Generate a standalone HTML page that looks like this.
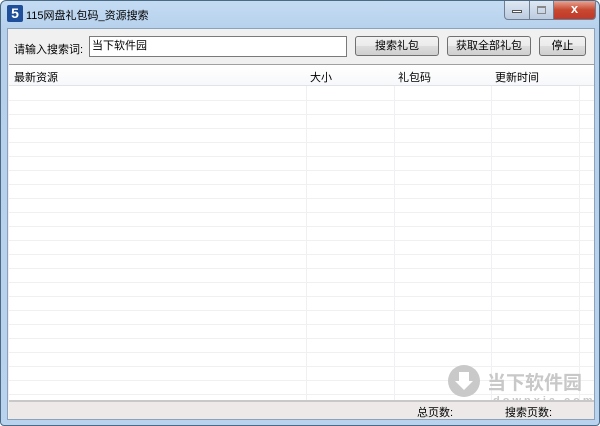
<!DOCTYPE html><html><head><meta charset="utf-8"><style>
*{margin:0;padding:0;box-sizing:border-box}
body{width:600px;height:426px;overflow:hidden;font:11px "Liberation Sans","Noto Sans CJK SC",sans-serif;color:#000;background:#fff}
.win{position:absolute;left:0;top:0;width:600px;height:426px;border:1px solid #4d6a85;border-radius:6px 6px 4px 4px;background:linear-gradient(#c4dcf3,#b6d0ec 30px,#b9d3ee);}
.title{position:absolute;left:25px;top:6px;font-size:11px;color:#000}
.logo{position:absolute;left:6px;top:4px;width:16px;height:17px;background:#1f4e9a;color:#fff;font:bold 14px "Liberation Sans";text-align:center;line-height:17px;border-radius:2px}
.client{position:absolute;left:6px;top:27px;width:588px;height:392px;background:#f0f0f0;border:1px solid #8aa2ba}
.btn{position:absolute;height:20px;border:1px solid #707070;border-radius:3px;background:linear-gradient(#f2f2f2,#ebebeb 50%,#dddddd 51%,#cfcfcf);text-align:center;line-height:18px}
.input{position:absolute;left:81px;top:7px;width:258px;height:21px;border:1px solid #7a7a7a;background:#fff;padding-left:2px;line-height:19px}
.list{position:absolute;left:1px;top:35px;width:585px;height:337px;background:#fff;border-top:1px solid #a0a0a0;
background-image:repeating-linear-gradient(#fff 0 13px,#f0f0f0 13px 14px);background-position:0 22px;background-repeat:repeat-x}
.hdr{position:absolute;left:0;top:0;width:585px;height:21px;background:linear-gradient(#fff,#f7f8fa);border-bottom:1px solid #e0e3e8}
.hdr span{position:absolute;top:4px}
.col{position:absolute;top:0;width:1px;height:337px;background:#eef0f3}
.status{position:absolute;left:1px;top:371px;width:585px;height:19px;background:#ece9e8;border-top:2px solid #c8c8c8}
.status span{position:absolute;top:2px}
.cap{position:absolute;top:0;height:19px;border:1px solid #6f7f93;border-top:none}
</style></head><body>
<div class="win">
<div class="logo">5</div>
<div class="title">115网盘礼包码_资源搜索</div>
<div class="cap" style="left:503px;width:26px;border-radius:0 0 0 4px;background:linear-gradient(#dfe8f3,#bccbe0)"><div style="margin:9px auto 0;width:10px;height:3px;background:#fff;border:1px solid #555"></div></div>
<div class="cap" style="left:528px;width:25px;background:linear-gradient(#dfe8f3,#bccbe0)"><div style="margin:5px auto 0;width:9px;height:8px;border:1px solid #888;border-top-width:2px"></div></div>
<div class="cap" style="left:552px;width:43px;border-radius:0 0 4px 0;background:linear-gradient(#e8a393,#c7482f 50%,#c0392b);color:#fff;text-align:center;font-weight:bold;line-height:16px;font-size:13px">x</div>
<div class="client">
<span style="position:absolute;left:6px;top:12px">请输入搜索词:</span>
<div class="input">当下软件园</div>
<div class="btn" style="left:347px;top:7px;width:84px">搜索礼包</div>
<div class="btn" style="left:439px;top:7px;width:84px">获取全部礼包</div>
<div class="btn" style="left:531px;top:7px;width:47px">停止</div>
<div class="list">
<div class="col" style="left:297px"></div><div class="col" style="left:385px"></div><div class="col" style="left:482px"></div><div class="col" style="left:570px"></div>
<div class="hdr"><span style="left:5px">最新资源</span><span style="left:301px">大小</span><span style="left:389px">礼包码</span><span style="left:486px">更新时间</span></div>
<div style="position:absolute;left:439px;top:300px;width:32px;height:32px;border-radius:50%;background:#c9c9c9"><div style="position:absolute;left:11px;top:7px;width:10px;height:10px;background:#fff"></div><div style="position:absolute;left:7px;top:16px;border:9px solid transparent;border-top:9px solid #fff;border-bottom:none"></div></div>
<div style="position:absolute;left:478px;top:303px;font-size:19px;color:#c8c8c8;font-weight:bold">当下软件园</div>
<div style="position:absolute;left:484px;top:330px;font-size:11px;color:#c8c8c8;letter-spacing:3px;font-weight:bold">downxia.com</div>
</div>
<div class="status"><span style="left:408px">总页数:</span><span style="left:496px">搜索页数:</span></div>
</div></div>
</body></html>
